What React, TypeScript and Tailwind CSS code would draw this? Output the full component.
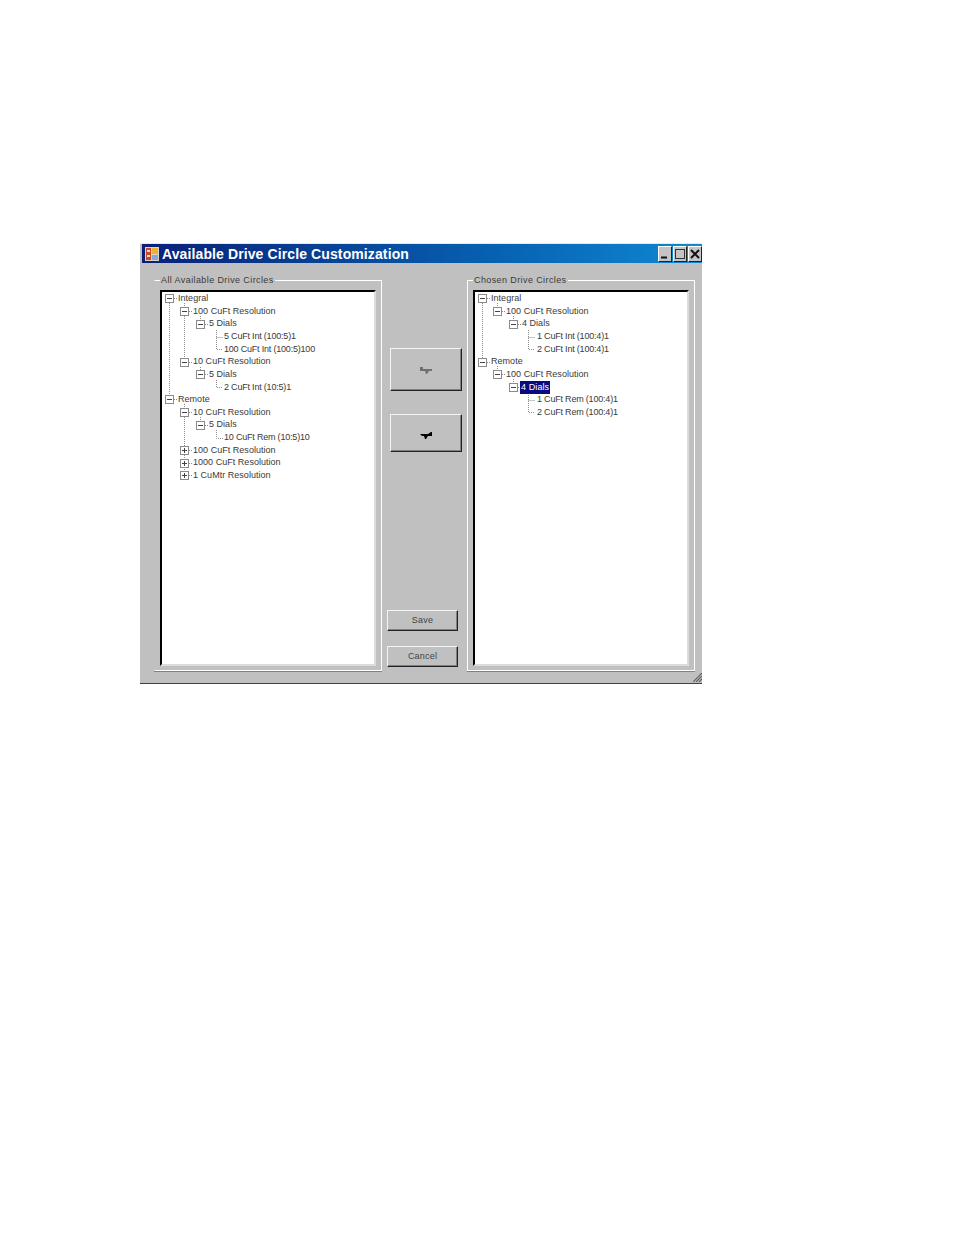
const leftTree = [
  { level: 0, label: "Integral", box: "minus" },
  { level: 1, label: "100 CuFt Resolution", box: "minus" },
  { level: 2, label: "5 Dials", box: "minus" },
  { level: 3, label: "5 CuFt Int (100:5)1" },
  { level: 3, label: "100 CuFt Int (100:5)100" },
  { level: 1, label: "10 CuFt Resolution", box: "minus" },
  { level: 2, label: "5 Dials", box: "minus" },
  { level: 3, label: "2 CuFt Int (10:5)1" },
  { level: 0, label: "Remote", box: "minus" },
  { level: 1, label: "10 CuFt Resolution", box: "minus" },
  { level: 2, label: "5 Dials", box: "minus" },
  { level: 3, label: "10 CuFt Rem (10:5)10" },
  { level: 1, label: "100 CuFt Resolution", box: "plus" },
  { level: 1, label: "1000 CuFt Resolution", box: "plus" },
  { level: 1, label: "1 CuMtr Resolution", box: "plus" },
]

const rightTree = [
  { level: 0, label: "Integral", box: "minus" },
  { level: 1, label: "100 CuFt Resolution", box: "minus" },
  { level: 2, label: "4 Dials", box: "minus" },
  { level: 3, label: "1 CuFt Int (100:4)1" },
  { level: 3, label: "2 CuFt Int (100:4)1" },
  { level: 0, label: "Remote", box: "minus" },
  { level: 1, label: "100 CuFt Resolution", box: "minus" },
  { level: 2, label: "4 Dials", box: "minus", selected: true },
  { level: 3, label: "1 CuFt Rem (100:4)1" },
  { level: 3, label: "2 CuFt Rem (100:4)1" },
]

const indent = ["pl-[3px]", "pl-[18px]", "pl-[34px]", "pl-[62px]"]

type Node = { level: number; label: string; box?: string; selected?: boolean }

function Expander({ box }: { box: string }) {
  return (
    <svg width="9" height="9" viewBox="0 0 9 9" className="shrink-0">
      <rect x="0.5" y="0.5" width="8" height="8" fill="#fff" stroke="#8a8a8a" />
      <path d={box === "plus" ? "M2 4.5h5M4.5 2v5" : "M2 4.5h5"} stroke="#444" />
    </svg>
  )
}

function Row({ node }: { node: Node }) {
  return (
    <div className={`flex h-[12.63px] items-center ${indent[node.level]}`}>
      {node.box && <Expander box={node.box} />}
      {node.box && <div className="mr-px h-0 w-[3px] border-t border-dotted border-[#8c8c8c]" />}
      <span
        className={
          node.selected
            ? "-ml-[2px] bg-[#0a0a80] pl-px pr-px leading-[13px] tracking-[0.1px] text-white"
            : node.level === 3
              ? "tracking-[-0.2px]"
              : "tracking-[0.03px]"
        }
      >
        {node.label}
      </span>
    </div>
  )
}

function Tree({ nodes, lines }: { nodes: Node[]; lines: string }) {
  return (
    <div className="relative flex-1 border-2 border-t-black border-l-black border-r-[#dcdcdc] border-b-[#dcdcdc] bg-white pt-[0.6px] font-['Liberation_Sans',sans-serif] text-[9px] text-[#3a3a3a]">
      <svg className="absolute inset-0 h-full w-full" fill="none">
        <path d={lines} stroke="#8c8c8c" strokeDasharray="1 1" />
      </svg>
      <div className="relative">
        {nodes.map((n, i) => (
          <Row key={i} node={n} />
        ))}
      </div>
    </div>
  )
}

function Group({
  title,
  nodes,
  lines,
  className,
}: {
  title: string
  nodes: Node[]
  lines: string
  className: string
}) {
  return (
    <fieldset
      className={`flex h-[396px] w-[228px] flex-col border border-t-white border-r-white border-b-white px-[5px] pb-[4px] pt-[5px] shadow-[0_1px_0_#808080] ${className}`}
    >
      <legend className="px-px font-['Liberation_Sans',sans-serif] text-[9px] leading-[10px] tracking-[0.4px] text-[#3a3a3a]">
        {title}
      </legend>
      <Tree nodes={nodes} lines={lines} />
    </fieldset>
  )
}

function Btn({ className, children }: { className: string; children: React.ReactNode }) {
  return (
    <div
      className={`flex items-center justify-center border border-t-[#f4f4f4] border-l-[#f4f4f4] border-r-[#222] border-b-[#222] bg-[#c0c0c0] shadow-[inset_-1px_-1px_0_#808080] ${className}`}
    >
      {children}
    </div>
  )
}

function TitleButton({ children }: { children: React.ReactNode }) {
  return (
    <div className="flex h-[16px] w-[14px] items-center justify-center border border-t-white border-l-white border-r-[#222] border-b-[#222] bg-[#c4c4c4]">
      <svg width="10" height="10" viewBox="0 0 10 10" fill="none" stroke="#111">
        {children}
      </svg>
    </div>
  )
}

const leftLines =
  "M7.5 11V103 M22.5 11V15 M22.5 24V66 M22.5 112V116 M22.5 125V180 M38.5 24V28 M38.5 75V79 M38.5 125V129 M54.5 38V57.5H61 M54.5 45.5H61 M54.5 88V95.5H61 M54.5 138V146.5H61"
const rightLines =
  "M7.5 11V66 M22.5 11V15 M38.5 24V28 M53.5 38V57.5H60 M53.5 45.5H60 M22.5 74V78 M38.5 87V91 M53.5 101V120.5H60 M53.5 108.5H60"

export default function App() {
  return (
    <div className="min-h-[1235px] bg-white pl-[140px] pt-[243px]">
      <div className="relative flex h-[441px] w-[562px] flex-col border-b border-b-[#404040] border-t border-t-[#e8e8e8] bg-[#c0c0c0]">
        {/* title bar */}
        <div className="ml-[2px] flex h-[19px] items-center bg-gradient-to-r from-[#0a1f78] to-[#1088d4] pl-[3px]">
          <svg width="14" height="14" viewBox="0 0 14 14" className="shrink-0">
            <rect width="14" height="14" fill="#d8d4c8" />
            <rect x="1" y="1" width="5" height="12" fill="#c84828" />
            <rect x="2" y="3" width="3" height="2" fill="#f0e0c0" />
            <rect x="2" y="8" width="3" height="2" fill="#f0e0c0" />
            <rect x="7" y="1" width="6" height="6" fill="#f0b030" />
            <rect x="7" y="8" width="6" height="5" fill="#88a8d8" />
          </svg>
          <span className="ml-[3px] flex-1 font-['Liberation_Sans',sans-serif] text-[14px] font-bold leading-none tracking-[0.11px] text-white">
            Available Drive Circle Customization
          </span>
          <div className="flex gap-px">
            <TitleButton>
              <path d="M1 8.5h6" strokeWidth="2" />
            </TitleButton>
            <TitleButton>
              <rect x="0.5" y="0.5" width="9" height="9" stroke="#333" />
            </TitleButton>
            <TitleButton>
              <path d="M1 1l8 8M9 1l-8 8" strokeWidth="2" />
            </TitleButton>
          </div>
        </div>

        {/* body */}
        <div className="flex flex-1 items-end pb-[12px] pl-[14px]">
          <Group
            title="All Available Drive Circles"
            nodes={leftTree}
            lines={leftLines}
            className="border-l-transparent"
          />
          <div className="flex h-[388px] w-[85px] flex-col pl-[5px] text-center font-['Liberation_Sans',sans-serif] text-[9px] tracking-[0.2px] text-[#444]">
            <Btn className="ml-[3px] mt-[65px] h-[43px] w-[72px]">
              <svg width="12" height="8" viewBox="0 0 12 8" className="mt-[3px]">
                <path d="M0 0H3V2H12V4H9L7 7H6L5 4H0Z" fill="#707070" />
              </svg>
            </Btn>
            <Btn className="ml-[3px] mt-[23px] h-[38px] w-[72px]">
              <svg width="12" height="8" viewBox="0 0 12 8" className="mt-[3px]">
                <path d="M0 3H8L11 1H12V5H8L6 8H5L4 5H2Z" fill="#000" />
              </svg>
            </Btn>
            <Btn className="mt-[158px] h-[21px] w-[71px]">Save</Btn>
            <Btn className="mt-[15px] h-[21px] w-[71px]">Cancel</Btn>
          </div>
          <Group title="Chosen Drive Circles" nodes={rightTree} lines={rightLines} className="border-l-white" />
        </div>

        {/* resize grip */}
        <svg
          width="9"
          height="9"
          viewBox="0 0 9 9"
          className="absolute bottom-px right-0"
          stroke="#606060"
          strokeWidth="1.2"
        >
          <path d="M9 0L0 9M9 3L3 9M9 6L6 9" />
        </svg>
      </div>
    </div>
  )
}
